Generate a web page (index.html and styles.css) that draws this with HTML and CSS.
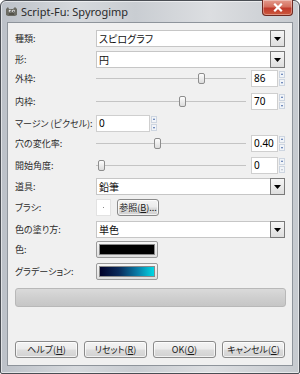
FILE: index.html
```html
<!DOCTYPE html>
<html lang="ja">
<head>
<meta charset="utf-8">
<link rel="stylesheet" href="styles.css">
</head>
<body>
<div class="window">
  <div class="titlebar">
    <svg class="appicon" width="13" height="11" viewBox="0 0 13 11">
      <path d="M1 3 L3 1 L4 3 L8 3 L10 1 L12 3 L12 9 L10 10 L3 10 L1 9 Z" fill="#6b6b63"/>
      <circle cx="5" cy="5" r="1.3" fill="#fff"/>
      <circle cx="8.5" cy="5" r="1.3" fill="#fff"/>
      <circle cx="5.2" cy="5.2" r="0.6" fill="#000"/>
      <circle cx="8.7" cy="5.2" r="0.6" fill="#000"/>
      <path d="M4 8 L9 8" stroke="#3e3a30" stroke-width="1"/>
    </svg>
    <span class="title">Script-Fu: Spyrogimp</span>
    <div class="close">
      <svg width="10" height="9" viewBox="0 0 10 9"><path d="M2 1.5 L8 7.5 M8 1.5 L2 7.5" stroke="#fff" stroke-width="2.2" stroke-linecap="square"/></svg>
    </div>
  </div>
  <div class="client">
    <div class="form">
      <div class="label">種類:</div>
      <div class="combo"><span class="ctext">スピログラフ</span><span class="drop"><svg width="7" height="4" viewBox="0 0 7 4"><path d="M0 0 L7 0 L3.5 4 Z" fill="#000"/></svg></span></div>

      <div class="label">形:</div>
      <div class="combo"><span class="ctext">円</span><span class="drop"><svg width="7" height="4" viewBox="0 0 7 4"><path d="M0 0 L7 0 L3.5 4 Z" fill="#000"/></svg></span></div>

      <div class="label">外枠:</div>
      <div class="slider-row">
        <div class="track"><div class="thumb" style="left:102px"></div></div>
        <div class="spin">86</div>
        <div class="arrows"><span class="up"></span><span class="down"></span></div>
      </div>

      <div class="label">内枠:</div>
      <div class="slider-row">
        <div class="track"><div class="thumb" style="left:83px"></div></div>
        <div class="spin">70</div>
        <div class="arrows"><span class="up"></span><span class="down"></span></div>
      </div>

      <div class="label">マージン (ピクセル):</div>
      <div class="spin-row">
        <div class="spin wide">0</div>
        <div class="arrows"><span class="up"></span><span class="down"></span></div>
      </div>

      <div class="label">穴の変化率:</div>
      <div class="slider-row">
        <div class="track"><div class="thumb" style="left:58px"></div></div>
        <div class="spin">0.40</div>
        <div class="arrows"><span class="up"></span><span class="down"></span></div>
      </div>

      <div class="label">開始角度:</div>
      <div class="slider-row">
        <div class="track"><div class="thumb" style="left:2px"></div></div>
        <div class="spin">0</div>
        <div class="arrows"><span class="up"></span><span class="down dim"></span></div>
      </div>

      <div class="label">道具:</div>
      <div class="combo"><span class="ctext">鉛筆</span><span class="drop"><svg width="7" height="4" viewBox="0 0 7 4"><path d="M0 0 L7 0 L3.5 4 Z" fill="#000"/></svg></span></div>

      <div class="label">ブラシ:</div>
      <div class="brush-row">
        <div class="brush-preview"><span class="dot"></span></div>
        <div class="btn browse">参照(<u>B</u>)...</div>
      </div>

      <div class="label">色の塗り方:</div>
      <div class="combo"><span class="ctext">単色</span><span class="drop"><svg width="7" height="4" viewBox="0 0 7 4"><path d="M0 0 L7 0 L3.5 4 Z" fill="#000"/></svg></span></div>

      <div class="label">色:</div>
      <div class="colorbtn"><div class="swatch black"></div></div>

      <div class="label">グラデーション:</div>
      <div class="colorbtn"><div class="swatch grad"></div></div>
    </div>

    <div class="progress"></div>

    <div class="buttons">
      <div class="btn action">ヘルプ(<u>H</u>)</div>
      <div class="btn action">リセット(<u>R</u>)</div>
      <div class="btn action">OK(<u>O</u>)</div>
      <div class="btn action">キャンセル(<u>C</u>)</div>
    </div>
  </div>
</div>
</body>
</html>
```

FILE: styles.css
```css
* { box-sizing: border-box; }
html, body { margin: 0; padding: 0; background: #fff; }
body {
  width: 300px;
  height: 374px;
  font-family: "Noto Sans CJK JP", "Noto Sans", sans-serif;
  font-feature-settings: "palt";
  color: #1a1a1a;
}
.window {
  width: 300px;
  height: 374px;
  border: 1px solid #4a4e54;
  border-radius: 6px 6px 2px 2px;
  background: linear-gradient(to right, #bcc1c8 0%, #d6d9dd 25%, #c9cdd2 45%, #dcdee1 70%, #c6cacf 100%);
  padding: 0 6px 7px 6px;
  display: flex;
  flex-direction: column;
  box-shadow: inset 0 0 0 1px rgba(255,255,255,0.55);
}
.titlebar {
  height: 21px;
  display: flex;
  align-items: center;
  position: relative;
}
.appicon { margin-left: -2px; margin-right: 3px; margin-top: -1px; }
.title {
  font-family: "Noto Sans", sans-serif;
  font-size: 11px;
  color: #2a2a2a;
  margin-top: -1px;
}
.close {
  position: absolute;
  right: 0;
  top: -1px;
  width: 31px;
  height: 16px;
  border: 1px solid #6e2a22;
  border-top: none;
  border-radius: 0 0 4px 4px;
  background: linear-gradient(to bottom, #e49a8c 0%, #d4705f 45%, #c0392b 55%, #cc5a3e 100%);
  display: flex;
  align-items: center;
  justify-content: center;
  box-shadow: inset 0 0 0 1px rgba(255,255,255,0.35);
}
.client {
  flex: 1;
  background: #f0f0f0;
  border: 1px solid #8e949b;
  padding: 7px 6px 0 7px;
  display: flex;
  flex-direction: column;
}
.form {
  display: grid;
  grid-template-columns: 81px 189px;
  grid-template-rows: 21px 19px 23px 22px 20px 22px 21px 21px 22px 20px 22px 17px;
}
.label {
  font-size: 9px;
  height: 17px;
  line-height: 17px;
  white-space: nowrap;
  color: #2b2b2b;
}
.combo {
  height: 17px;
  display: flex;
  background: #fff;
  border: 1px solid #c6c6c6;
}
.ctext {
  flex: 1;
  font-size: 10px;
  line-height: 15px;
  padding-left: 2px;
  color: #111;
}
.drop {
  width: 15px;
  height: 17px;
  margin: -1px -1px 0 0;
  border: 1px solid #7a7a7a;
  background: linear-gradient(to bottom, #f6f6f6, #dedede);
  display: flex;
  align-items: center;
  justify-content: center;
}
.slider-row, .spin-row, .brush-row {
  height: 17px;
  display: flex;
  align-items: center;
}
.track {
  width: 150px;
  height: 17px;
  position: relative;
  margin-right: 5px;
}
.track::before {
  content: "";
  position: absolute;
  left: 0;
  right: 0;
  top: 8px;
  height: 1px;
  background: #c4c4c4;
}
.thumb {
  position: absolute;
  top: 3px;
  width: 7px;
  height: 11px;
  border: 1px solid #8d8d8d;
  border-radius: 2px;
  background: linear-gradient(to bottom, #fdfdfd, #dcdcdc);
}
.spin {
  width: 27px;
  height: 17px;
  background: #fff;
  border: 1px solid #cfcfcf;
  font-size: 10px;
  line-height: 15px;
  padding-left: 2px;
  color: #000;
  font-family: "Noto Sans", sans-serif;
}
.spin.wide { width: 54px; }
.arrows {
  width: 6px;
  height: 17px;
  margin-left: 1px;
  display: flex;
  flex-direction: column;
  justify-content: space-between;
  padding: 1px 0;
}
.arrows span {
  height: 7px;
  width: 6px;
  border: 1px solid #cdd5e0;
  background: #f1f4f8;
  position: relative;
}
.arrows span::after {
  content: "";
  position: absolute;
  left: 1px;
  width: 0;
  height: 0;
  border-left: 1px solid transparent;
  border-right: 1px solid transparent;
}
.arrows .up::after { top: 1px; border-bottom: 2px solid #4a6aa8; }
.arrows .down::after { top: 2px; border-top: 2px solid #4a6aa8; }
.arrows .down.dim::after { border-top-color: #b6bcc6; }
.brush-preview {
  width: 15px;
  height: 17px;
  background: #fff;
  border: 1px solid #e2e2e2;
  position: relative;
  margin-right: 6px;
}
.dot {
  position: absolute;
  left: 6px;
  top: 7px;
  width: 1px;
  height: 1px;
  background: #888;
}
.btn {
  border: 1px solid #8a8a8a;
  border-radius: 3px;
  background: linear-gradient(to bottom, #f4f4f4 0%, #ebebeb 48%, #dddddd 52%, #d1d1d1 100%);
  font-size: 9px;
  color: #1a1a1a;
  display: flex;
  align-items: center;
  justify-content: center;
  white-space: nowrap;
  box-shadow: inset 0 0 0 1px rgba(255,255,255,0.7);
}
.btn u { text-decoration: underline; text-underline-offset: 1px; }
.browse {
  width: 42px;
  height: 17px;
}
.colorbtn {
  width: 62px;
  height: 17px;
  border: 1px solid #9a9a9a;
  border-radius: 2px;
  background: linear-gradient(to bottom, #f6f6f6, #dedede);
  padding: 2px;
}
.swatch { width: 100%; height: 100%; border: 1px solid #8a8a8a; }
.swatch.black { background: #000; }
.swatch.grad { background: linear-gradient(to right, #01012a 0%, #0a2a5a 35%, #0a7ea8 70%, #00d8e4 100%); }
.progress {
  margin-top: 8px;
  width: 271px;
  height: 19px;
  border: 1px solid #b8b8b8;
  border-radius: 3px;
  background: linear-gradient(to bottom, #dadada 0%, #cfcfcf 50%, #c6c6c6 100%);
}
.buttons {
  margin-top: 34px;
  display: flex;
  gap: 6px;
}
.action {
  width: 63px;
  height: 17px;
}
```
